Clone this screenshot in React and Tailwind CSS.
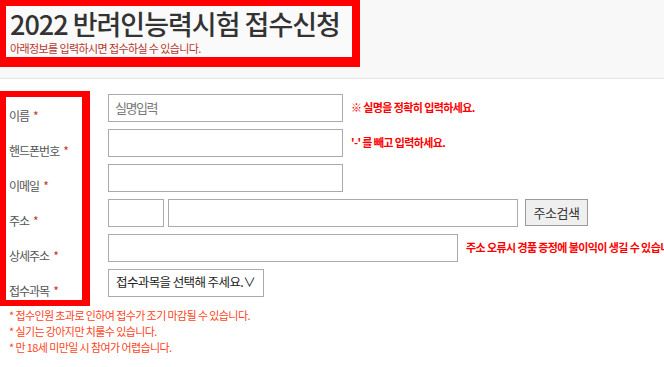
import React from "react";

const font = { fontFamily: '"Noto Sans CJK KR", "Noto Sans", sans-serif' };

const labels = ["이름", "핸드폰번호", "이메일", "주소", "상세주소", "접수과목"];

function Input({ className = "", placeholder }) {
  return (
    <input
      className={
        "h-[28px] border border-[#aaaaaa] bg-white px-[6px] text-[13px] tracking-[-1.5px] text-[#333] placeholder:text-[#777] outline-none " +
        className
      }
      placeholder={placeholder}
      type="text"
    />
  );
}

function Row({ children }) {
  return <div className="flex h-[35px] items-center">{children}</div>;
}

function Help({ children }) {
  return (
    <span className="ml-[8px] whitespace-nowrap text-[11px] font-semibold tracking-[-0.6px] text-[#ff0000]">
      {children}
    </span>
  );
}

export default function App() {
  return (
    <div className="w-full overflow-hidden bg-white" style={font}>
      <div className="h-[79px] border-b border-[#e4e4e4] bg-[#f8f8f8]">
        <div className="h-[67px] w-[360px] border-[6px] border-r-[8px] border-b-[10px] border-[#ff0000] bg-[#fafafa] pl-[4px] pt-[2px]">
          <h1 className="text-[27px] font-medium leading-[32px] tracking-[-1px] text-[#333]">
            2022 반려인능력시험 접수신청
          </h1>
          <p className="mt-[2px] text-[11px] leading-[13px] tracking-[-0.6px] text-[#b8342a]">
            아래정보를 입력하시면 접수하실 수 있습니다.
          </p>
        </div>
      </div>

      <div className="pt-[12px]">
        <div className="flex">
          <div className="h-[215px] w-[90px] shrink-0 border-[6px] border-r-[8px] border-[#ff0000] pl-[3px] pt-[1px]">
            {labels.map((l) => (
              <div key={l} className="flex h-[35px] items-center text-[12px] tracking-[-1px] text-[#555]">
                {l}
                <span className="ml-[4px] text-[#c0392b]">*</span>
              </div>
            ))}
          </div>
          <div className="ml-[18px] flex flex-col">
            <div className="mt-[-1px]">
              <Row>
                <Input className="w-[235px]" placeholder="실명입력" />
                <Help>※ 실명을 정확히 입력하세요.</Help>
              </Row>
              <Row>
                <Input className="w-[235px]" />
                <Help>'-' 를 빼고 입력하세요.</Help>
              </Row>
              <Row>
                <Input className="w-[235px]" />
              </Row>
              <Row>
                <Input className="w-[56px]" />
                <Input className="ml-[4px] w-[350px]" />
                <button className="ml-[7px] h-[27px] w-[63px] border border-[#9a9a9a] bg-[#efefef] text-[13px] tracking-[-0.5px] text-[#333]">
                  주소검색
                </button>
              </Row>
              <Row>
                <Input className="w-[350px]" />
                <Help>주소 오류시 경품 증정에 불이익이 생길 수 있습니다.</Help>
              </Row>
              <Row>
                <div className="flex h-[28px] w-[156px] items-center whitespace-nowrap border border-[#aaaaaa] bg-white pl-[7px] text-[12.5px] tracking-[-0.6px] text-[#222]">
                  접수과목을 선택해 주세요.∨
                </div>
              </Row>
            </div>
          </div>
        </div>
        <div className="mt-[1px] pl-[9px] text-[11px] leading-[16px] tracking-[-0.6px] text-[#ff4422]">
          <p>* 접수인원 초과로 인하여 접수가 조기 마감될 수 있습니다.</p>
          <p>* 실기는 강아지만 치룰수 있습니다.</p>
          <p>* 만 18세 미만일 시 참여가 어렵습니다.</p>
        </div>
      </div>
    </div>
  );
}
